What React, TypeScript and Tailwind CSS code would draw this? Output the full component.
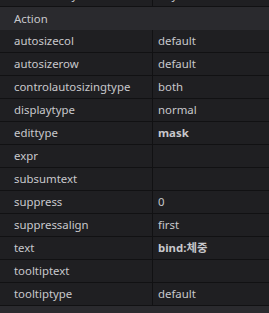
import React from "react";

type Prop = { name: string; value?: string; bold?: boolean };

const rows: Prop[] = [
  { name: "autosizecol", value: "default" },
  { name: "autosizerow", value: "default" },
  { name: "controlautosizingtype", value: "both" },
  { name: "displaytype", value: "normal" },
  { name: "edittype", value: "mask", bold: true },
  { name: "expr" },
  { name: "subsumtext" },
  { name: "suppress", value: "0" },
  { name: "suppressalign", value: "first" },
  { name: "text", value: "bind:체중", bold: true },
  { name: "tooltiptext" },
  { name: "tooltiptype", value: "default" },
];

function Row({ name, value, bold }: Prop) {
  return (
    <div className="grid grid-cols-[153px_1fr] h-[23px] border-b border-[#111113] bg-[#1f1f22]">
      <div className="flex items-center pl-[14px] border-r border-[#111113] whitespace-nowrap overflow-hidden">
        {name}
      </div>
      <div className={`flex items-center pl-[5px] whitespace-nowrap ${bold ? "font-bold" : ""}`}>
        {value}
      </div>
    </div>
  );
}

function Group({ title }: { title: string }) {
  return (
    <div className="h-[23px] flex items-center pl-[14px] bg-[#2a2a2e]">{title}</div>
  );
}

export default function App() {
  return (
    <div
      className="w-[269px] h-[313px] overflow-hidden bg-[#1f1f22] text-[11.4px] text-[#c8c8cc]"
      style={{ fontFamily: '"Noto Sans", "Noto Sans CJK KR", sans-serif' }}
    >
      <div className="-mt-[16px]">
        <Row name="accessibility" value="any" />
      </div>
      <Group title="Action" />
      {rows.map((r) => (
        <Row key={r.name} {...r} />
      ))}
      <Group title="Misc" />
    </div>
  );
}
